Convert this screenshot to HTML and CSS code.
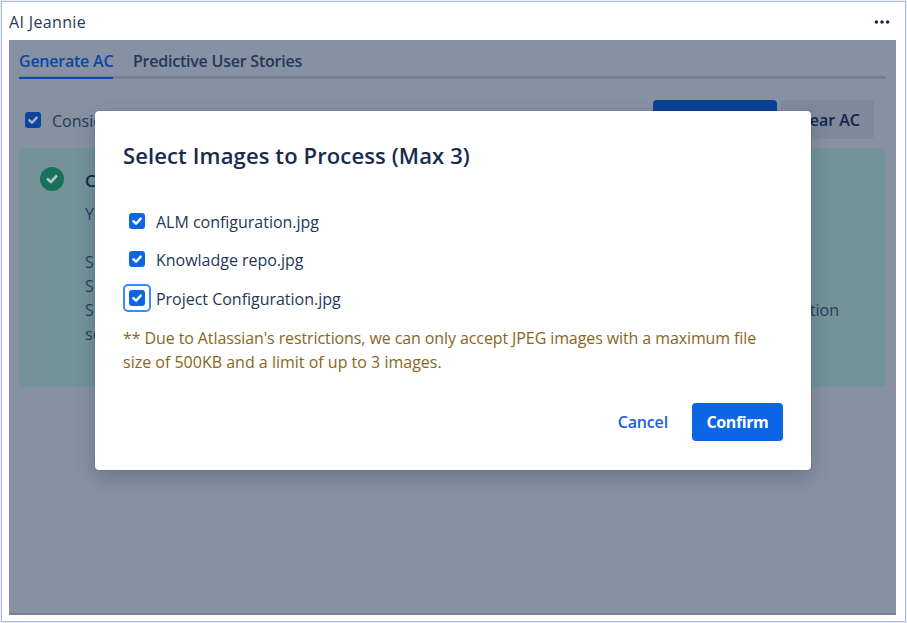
FILE: index.html
```html
<!DOCTYPE html>
<html lang="en">
<head>
<meta charset="utf-8">
<title>AI Jeannie</title>
<link rel="stylesheet" href="styles.css">
</head>
<body>
<svg width="0" height="0" class="defs" aria-hidden="true">
  <symbol id="check" viewBox="0 0 16 16"><path d="M4.3 8.2 7 10.7 11.7 5.6" fill="none" stroke="currentColor" stroke-width="2.4" stroke-linecap="round" stroke-linejoin="round"/></symbol>
</svg>
<div class="frame">
  <header class="header">
    <span class="title">AI Jeannie</span>
    <svg class="more" viewBox="0 0 16 6"><circle cx="2.4" cy="3" r="1.8"/><circle cx="8" cy="3" r="1.8"/><circle cx="13.6" cy="3" r="1.8"/></svg>
  </header>
  <main class="panel">
    <nav class="tabs">
      <span class="tab active">Generate AC</span>
      <span class="tab">Predictive User Stories</span>
    </nav>
    <div class="toolbar">
      <span class="box dim"><svg><use href="#check"/></svg></span>
      <span class="consider">Consider</span>
      <span class="primary"></span>
      <span class="clear">Clear AC</span>
    </div>
    <section class="message">
      <span class="success"><svg><use href="#check"/></svg></span>
      <div class="message-body">
        <h2>C</h2>
        <p>Yo</p>
        <p class="gap">S</p>
        <p>S</p>
        <p class="split"><span>S</span><span>tion</span></p>
        <p>se</p>
      </div>
    </section>
  </main>
</div>
<div class="overlay">
  <div class="modal">
    <h1>Select Images to Process (Max 3)</h1>
    <div class="options">
      <label><span class="ring"><span class="box"><svg><use href="#check"/></svg></span></span><span class="name">ALM configuration.jpg</span></label>
      <label><span class="ring"><span class="box"><svg><use href="#check"/></svg></span></span><span class="name">Knowladge repo.jpg</span></label>
      <label><span class="ring focus"><span class="box"><svg><use href="#check"/></svg></span></span><span class="name">Project Configuration.jpg</span></label>
    </div>
    <p class="note"><span class="note-lead">** Due to Atlassian's restrictions, we can only accept JPEG images with a maximum file</span><br>size of 500KB and a limit of up to 3 images.</p>
    <footer class="actions">
      <span class="cancel">Cancel</span>
      <span class="confirm">Confirm</span>
    </footer>
  </div>
</div>
</body>
</html>
```

FILE: styles.css
```css
* { box-sizing: border-box; }
body {
  margin: 0;
  width: 907px;
  height: 623px;
  overflow: hidden;
  padding: 1px;
  background: #e6edfb;
  color: #253858;
  font: 16px/24px "Open Sans", "Noto Sans", sans-serif;
}
.defs { position: absolute; }
h1, h2, p { margin: 0; }
.frame {
  width: 905px;
  height: 621px;
  border: 1px solid #aabce2;
  background: #fff;
  padding: 0 9px 0 7px;
}
.header {
  height: 38px;
  display: flex;
  align-items: center;
  justify-content: space-between;
  padding: 2px 6px 0 0;
}
.title { font-size: 16px; font-weight: 500; letter-spacing: .35px; }
.more { width: 16px; height: 6px; fill: #172b4d; }
.panel {
  height: 575px;
  background: #8691a1;
  border-bottom: 2px solid #758095;
  padding: 0 10px;
}
.tabs {
  height: 40px;
  display: flex;
  gap: 20px;
  background: linear-gradient(#758095, #758095) 0 36px / 100% 3px no-repeat;
}
.tab { height: 39px; padding-top: 9px; font-weight: 600; letter-spacing: -.23px; color: #253858; white-space: nowrap; }
.tab.active { width: 94px; color: #0d45a3; border-bottom: 2px solid #0b47a5; }
.toolbar {
  height: 39px;
  margin: 20px 12px 9px 6px;
  display: flex;
  align-items: center;
}
.box {
  display: flex;
  width: 16px;
  height: 16px;
  border-radius: 3px;
  background: #0c66e4;
  color: #fff;
}
.box svg { width: 16px; height: 16px; }
.box.dim { background: #0b469c; color: #a9b3c2; }
.consider { margin: 3px auto 0 11px; }
.primary { width: 124px; height: 39px; border-radius: 4px; background: #0a4296; }
.clear {
  width: 93px;
  height: 39px;
  margin-left: 4px;
  padding: 8px 14px 0 0;
  text-align: right;
  border-radius: 4px;
  background: #7f899b;
  color: #13244a;
  font-weight: 600;
}
.message {
  height: 239px;
  border-radius: 5px;
  background: #759299;
  display: flex;
  padding: 19px 47px 0 21px;
}
.success {
  display: flex;
  align-items: center;
  justify-content: center;
  width: 24px;
  height: 24px;
  border-radius: 50%;
  background: #19705d;
  color: #b2c5c9;
}
.success svg { width: 18px; height: 18px; }
.message-body { flex: 1; margin-left: 21px; padding-top: 2px; }
.message-body h2 { font: inherit; font-weight: 600; color: #13244a; font-size: 17px; }
.message-body p { color: #253d5a; }
.message-body h2 + p { margin-top: 9px; }
.message-body .gap { margin-top: 24px; }
.split { display: flex; justify-content: space-between; }
.overlay { position: absolute; left: 95px; top: 111px; }
.modal {
  width: 716px;
  height: 359px;
  background: #fff;
  border-radius: 4px;
  box-shadow: 0 0 1px rgba(9, 30, 66, .6), 0 8px 20px rgba(9, 30, 66, .22);
  padding: 27px 28px 0 28px;
}
h1 { font-size: 22px; line-height: 34px; font-weight: 600; color: #172b4d; white-space: nowrap; letter-spacing: .12px; }
.options { margin-top: 30px; }
label { display: flex; align-items: center; height: 38.3px; white-space: nowrap; }
.ring { display: flex; width: 28px; height: 28px; border: 2px solid transparent; border-radius: 5px; padding: 4px; margin-right: 5px; }
.ring.focus { border-color: #388bff; }
.name { padding-top: 2px; letter-spacing: -.02px; }
.note { margin-top: 9px; color: #8a661b; white-space: nowrap; }
.note-lead { letter-spacing: -.1px; }
.actions { display: flex; justify-content: flex-end; align-items: center; margin-top: 29px; font-weight: 600; gap: 24px; }
.cancel { color: #1b5fe0; letter-spacing: -.15px; padding-top: 1px; }
.confirm {
  width: 91px;
  height: 38px;
  line-height: 39px;
  text-align: center;
  border-radius: 4px;
  background: #0c66e4;
  color: #fff;
  font-weight: 700;
  letter-spacing: -.4px;
}
```
